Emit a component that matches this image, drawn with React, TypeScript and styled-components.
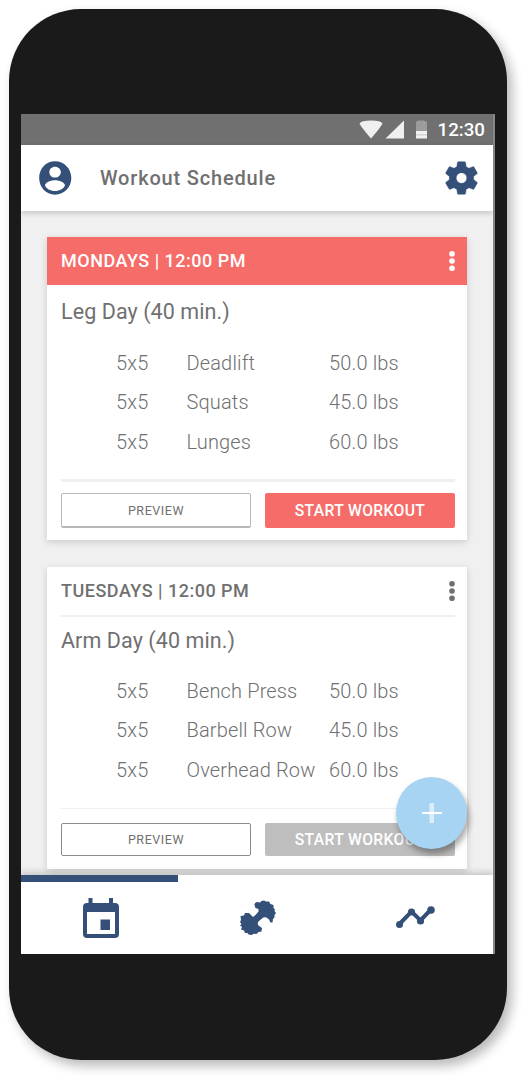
import React from "react";
import styled, { createGlobalStyle } from "styled-components";

const navy = "#345078";
const coral = "#f66c69";

const GlobalStyle = createGlobalStyle`
  * { box-sizing: border-box; }
  body { margin: 0; background: #fff; font-family: Roboto, "Liberation Sans", sans-serif; color: #707070; }
  button { font-family: inherit; padding: 0; margin: 0; cursor: pointer; }
`;

const Stage = styled.div`
  height: 1080px;
  padding: 9px 0 0 8.5px;
  overflow: hidden;
`;

const Phone = styled.div`
  width: 498px;
  height: 1050.5px;
  padding: 105px 11.5px 0 12.5px;
  border-radius: 72px;
  background: #1a1a1a;
  box-shadow: 5px 6px 12px rgba(0, 0, 0, 0.28);
`;

const Screen = styled.div`
  position: relative;
  width: 474px;
  height: 840px;
  display: flex;
  flex-direction: column;
  overflow: hidden;
  background: #f0f0f0;
  border-right: 2px solid #868686;
`;

const StatusBar = styled.div`
  flex: none;
  height: 31px;
  display: flex;
  align-items: center;
  justify-content: flex-end;
  padding-right: 8px;
  background: #707070;
  color: #fff;
`;

const Clock = styled.span`
  margin-left: 11px;
  font-size: 18.7px;
  font-weight: 500;
  line-height: 30px;
`;

const AppBar = styled.header`
  position: relative;
  z-index: 1;
  flex: none;
  height: 66px;
  display: flex;
  align-items: center;
  padding: 0 12px 0 14px;
  background: #fff;
  box-shadow: 0 2px 6px rgba(0, 0, 0, 0.2);
`;

const Title = styled.h1`
  flex: 1;
  margin: 0 0 0 25px;
  font-size: 20px;
  font-weight: 500;
  letter-spacing: 0.82px;
  line-height: 24px;
`;

const Content = styled.main`
  flex: 1;
  min-height: 0;
  display: flex;
  flex-direction: column;
  gap: 27px;
  padding: 26px 26px 0;
`;

const Card = styled.section`
  flex: none;
  width: 420px;
  background: #fff;
  box-shadow: 0 2px 7px rgba(0, 0, 0, 0.16);
`;

const CardHeader = styled.div<{ $active: boolean }>`
  height: 48px;
  display: flex;
  align-items: center;
  justify-content: space-between;
  padding: 0 12px 0 14px;
  background: ${(p) => (p.$active ? coral : "#fff")};
  color: ${(p) => (p.$active ? "#fff" : "#707070")};
`;

const Slot = styled.h2`
  margin: 0;
  font-size: 18px;
  font-weight: 500;
  letter-spacing: 0.5px;
  line-height: 24px;
`;

const Rule = styled.hr<{ $size: number }>`
  height: ${(p) => p.$size}px;
  margin: 0 12.5px 0 14px;
  border: 0;
  background: #f0f0f0;
`;

const CardBody = styled.div<{ $active: boolean }>`
  height: ${(p) => (p.$active ? 255 : 252)}px;
  display: flex;
  flex-direction: column;
`;

const WorkoutName = styled.h3<{ $active: boolean }>`
  height: ${(p) => (p.$active ? 52 : 48)}px;
  margin: 0;
  padding-left: 14px;
  font-size: 21.5px;
  font-weight: 400;
  letter-spacing: 0.08px;
  line-height: ${(p) => (p.$active ? 53 : 47)}px;
`;

const Exercises = styled.ul`
  flex: 1;
  margin: 0;
  padding: 5.5px 0 0 69px;
  list-style: none;
`;

const Exercise = styled.li`
  height: 39.5px;
  display: grid;
  grid-template-columns: 70.5px 142.5px 100px;
  font-size: 20px;
  font-weight: 300;
  letter-spacing: 0.15px;
  line-height: 40px;
  white-space: nowrap;
`;

const Actions = styled.div<{ $active: boolean }>`
  height: ${(p) => (p.$active ? 35 : 33)}px;
  display: grid;
  grid-template-columns: 190px 190px;
  gap: 14px;
  margin: ${(p) => (p.$active ? 11 : 14)}px 0 ${(p) => (p.$active ? 12 : 13)}px 14px;
`;

const PreviewButton = styled.button<{ $active: boolean }>`
  border: 1px solid ${(p) => (p.$active ? "#b8b8b8" : "#8c8c8c")};
  border-bottom-width: ${(p) => (p.$active ? 2 : 1)}px;
  border-radius: 2px;
  background: #fff;
  color: #707070;
  font-size: 12.5px;
  letter-spacing: 0.55px;
`;

const StartButton = styled.button<{ $active: boolean }>`
  border: 0;
  border-radius: 2px;
  background: ${(p) => (p.$active ? coral : "#bebebe")};
  color: #fff;
  font-size: 15.7px;
  font-weight: 500;
  letter-spacing: 0.35px;
`;

const AddButton = styled.button`
  position: absolute;
  right: 26px;
  bottom: 105px;
  z-index: 2;
  width: 71px;
  height: 72px;
  display: grid;
  place-items: center;
  border: 0;
  border-radius: 50%;
  background: #a8d4f3;
  box-shadow: 2px 5px 6px rgba(0, 0, 0, 0.35);
`;

const Nav = styled.nav`
  position: relative;
  z-index: 1;
  flex: none;
  height: 79px;
  display: grid;
  grid-template-columns: 157px 158px 157px;
  background: #fff;
  box-shadow: 0 -3px 6px rgba(0, 0, 0, 0.17);
`;

const Tab = styled.a<{ $active?: boolean }>`
  display: flex;
  align-items: center;
  justify-content: center;
  padding-left: 2px;
  border-top: 7px solid ${(p) => (p.$active ? navy : "transparent")};
  color: ${navy};
`;

const MoreIcon = () => (
  <svg width="6" height="20" viewBox="0 0 6 20" fill="currentColor">
    <circle cx="3" cy="2.8" r="2.8" />
    <circle cx="3" cy="10" r="2.8" />
    <circle cx="3" cy="17.2" r="2.8" />
  </svg>
);

interface Workout {
  slot: string;
  name: string;
  exercises: [string, string, string][];
  active: boolean;
}

const workouts: Workout[] = [
  {
    slot: "MONDAYS | 12:00 PM",
    name: "Leg Day (40 min.)",
    exercises: [
      ["5x5", "Deadlift", "50.0 lbs"],
      ["5x5", "Squats", "45.0 lbs"],
      ["5x5", "Lunges", "60.0 lbs"],
    ],
    active: true,
  },
  {
    slot: "TUESDAYS | 12:00 PM",
    name: "Arm Day (40 min.)",
    exercises: [
      ["5x5", "Bench Press", "50.0 lbs"],
      ["5x5", "Barbell Row", "45.0 lbs"],
      ["5x5", "Overhead Row", "60.0 lbs"],
    ],
    active: false,
  },
];

const WorkoutCard = ({ slot, name, exercises, active }: Workout) => (
  <Card>
    <CardHeader $active={active}>
      <Slot>{slot}</Slot>
      <MoreIcon />
    </CardHeader>
    {!active && <Rule $size={2} />}
    <CardBody $active={active}>
      <WorkoutName $active={active}>{name}</WorkoutName>
      <Exercises>
        {exercises.map(([sets, exercise, weight]) => (
          <Exercise key={exercise}>
            <span>{sets}</span>
            <span>{exercise}</span>
            <span>{weight}</span>
          </Exercise>
        ))}
      </Exercises>
      <Rule $size={active ? 3 : 1} />
      <Actions $active={active}>
        <PreviewButton $active={active}>PREVIEW</PreviewButton>
        <StartButton $active={active}>START WORKOUT</StartButton>
      </Actions>
    </CardBody>
  </Card>
);

const App = () => (
  <>
    <GlobalStyle />
    <Stage>
      <Phone>
        <Screen>
          <StatusBar>
            <svg width="68" height="19" viewBox="0 0 68 19" fill="#f0f0f0">
              <path d="M0.500 3.500Q2 0.500 12 0.500T23.500 3.500Q22 7 12 18.500Q2 7 0.500 3.500Z" />
              <path d="M26.500 18.500L45 0.500V18.500Z" />
              <path d="M57 2Q57 1 59 1V0.500H65V1Q68 1 68 2V11H57Z" fill="#9c9c9c" />
              <path d="M57 11h11v7.500H57Z" />
              <path d="M57 14h11v1.500H57Z" fill="#d4d4d4" />
            </svg>
            <Clock>12:30</Clock>
          </StatusBar>
          <AppBar>
            <svg width="40" height="40" viewBox="0 0 24 24" fill={navy}>
              <path d="M12 2C6.480 2 2.500 6.480 2.500 12s3.980 10 9.500 10 9.800-4.480 9.800-10S17.520 2 12 2zm0 3.300c1.930 0 3.500 1.500 3.500 3.200S13.930 11.700 12 11.700 8.600 10.300 8.600 8.500 10.070 5.300 12 5.300zm0 14.500c-2.800 0-5.300-1.480-6-3.320.030-1.990 4-3.080 6-3.080 1.990 0 5.970 1.090 6 3.080-.7 1.840-3.200 3.320-6 3.320z" />
            </svg>
            <Title>Workout Schedule</Title>
            <svg width="39" height="40" viewBox="0 0 24 24" fill={navy}>
              <path d="M19.430 12.980c.040-.320.070-.640.070-.980s-.030-.660-.070-.980l2.110-1.650c.190-.150.240-.420.120-.640l-2-3.460c-.120-.220-.390-.300-.610-.220l-2.490 1c-.520-.400-1.080-.730-1.690-.980l-.380-2.650C14.460 2.180 14.250 2 14 2h-4c-.250 0-.460.180-.490.420l-.380 2.650c-.610.250-1.170.590-1.690.980l-2.490-1c-.230-.090-.490 0-.610.220l-2 3.460c-.130.220-.070.490.120.640l2.110 1.650c-.040.320-.070.650-.070.980s.030.660.070.980l-2.110 1.650c-.190.150-.240.420-.120.640l2 3.460c.120.220.390.300.610.220l2.490-1c.520.400 1.080.730 1.690.980l.380 2.650c.030.240.240.420.490.420h4c.250 0 .460-.180.490-.420l.380-2.650c.610-.250 1.170-.590 1.690-.980l2.490 1c.230.090.490 0 .610-.220l2-3.460c.120-.220.070-.490-.120-.640l-2.110-1.650zM12 15.300a3.300 3.300 0 1 1 0-6.600a3.300 3.300 0 1 1 0 6.600z" stroke={navy} strokeWidth="0.3" />
            </svg>
          </AppBar>
          <Content>
            {workouts.map((w) => (
              <WorkoutCard key={w.slot} {...w} />
            ))}
          </Content>
          <AddButton aria-label="Add workout">
            <svg width="20" height="20" viewBox="0 0 20 20" fill="#fff">
              <path d="M0 9h20v2H0Z" />
              <path d="M7.500 0h4.500v20H7.500Z" opacity="0.6" />
            </svg>
          </AddButton>
          <Nav>
            <Tab $active>
              <svg width="36" height="40" viewBox="0 0 36 40" fill="currentColor">
                <path fillRule="evenodd" d="M5.500 0H9.500V5H26V0H30V5H32Q36 5 36 9V36Q36 40 32 40H4Q0 40 0 36V9Q0 5 4 5H5.500ZM4 14V36H32V14ZM17.500 21.500H27V32H17.500Z" />
              </svg>
            </Tab>
            <Tab>
              <svg width="36" height="36" viewBox="0 0 36 36" fill="currentColor">
                <path d="M14.500 5Q14 3 17 2L20 2.500Q21 0.500 24 0.500L26 1.500L29 1.500L30.500 4L33.500 5L33.500 8L35 9.500L34.500 11L36 13L34.500 15L34.500 17.500L33 19L32.500 22.500L30.500 22.500L29 19.500L26.500 17.500Q24 16.500 22 18.500L18.500 21.500Q17 23.500 18.500 25.500L22 28L21.500 31.500L18.500 32L16.500 34L13.500 33.800L12 35L8.500 34.500L7.500 33L5 33L4 30.500L1 29.500L2 27L0 25.500L1.500 24L0 22L1 20L0.500 16L4 15.500L5 13L9 13L11 15L13 17L15.500 15L18.500 11.500L18.500 9L15.500 8Z" />
              </svg>
            </Tab>
            <Tab>
              <svg width="40" height="24" viewBox="0 0 40 24" fill="currentColor">
                <path d="M3.500 18L15.500 5.500L24.500 14.500L35 3.500" fill="none" stroke="currentColor" strokeWidth="4" />
                <circle cx="3.500" cy="18.500" r="3.500" />
                <circle cx="15.500" cy="6" r="3.600" />
                <circle cx="24.500" cy="15" r="3.600" />
                <circle cx="35" cy="4" r="3.800" />
              </svg>
            </Tab>
          </Nav>
        </Screen>
      </Phone>
    </Stage>
  </>
);

export default App;
